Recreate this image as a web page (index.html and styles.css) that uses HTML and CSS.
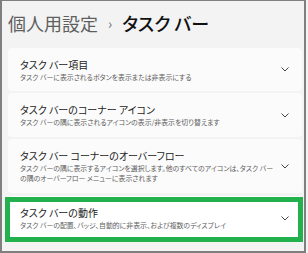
FILE: index.html
```html
<!DOCTYPE html>
<html lang="ja">
<head>
<meta charset="utf-8">
<link rel="stylesheet" href="styles.css">
</head>
<body>
<div class="frame">
  <header class="header">
    <span class="crumb">個人用設定</span>
    <span class="sep">›</span>
    <span class="current">タスク バー</span>
  </header>
  <div class="list">
    <div class="card c1">
      <div class="text">
        <div class="title">タスク バー項目</div>
        <div class="sub">タスク バーに表示されるボタンを表示または非表示にする</div>
      </div>
      <svg class="chev" width="8" height="5" viewBox="0 0 8 5"><polyline points="0.5,0.5 4,4 7.5,0.5" fill="none" stroke="#444" stroke-width="1"/></svg>
    </div>
    <div class="card c2">
      <div class="text">
        <div class="title">タスク バーのコーナー アイコン</div>
        <div class="sub">タスク バーの隅に表示されるアイコンの表示/非表示を切り替えます</div>
      </div>
      <svg class="chev" width="8" height="5" viewBox="0 0 8 5"><polyline points="0.5,0.5 4,4 7.5,0.5" fill="none" stroke="#444" stroke-width="1"/></svg>
    </div>
    <div class="card c3">
      <div class="text">
        <div class="title">タスク バー コーナーのオーバーフロー</div>
        <div class="sub">タスク バーの隅に表示するアイコンを選択します。他のすべてのアイコンは、タスク バー<br>の隅のオーバーフロー メニューに表示されます</div>
      </div>
      <svg class="chev" width="8" height="5" viewBox="0 0 8 5"><polyline points="0.5,0.5 4,4 7.5,0.5" fill="none" stroke="#444" stroke-width="1"/></svg>
    </div>
    <div class="card c4">
      <div class="text">
        <div class="title">タスク バーの動作</div>
        <div class="sub">タスク バーの配置、バッジ、自動的に非表示、および複数のディスプレイ</div>
      </div>
      <svg class="chev" width="8" height="5" viewBox="0 0 8 5"><polyline points="0.5,0.5 4,4 7.5,0.5" fill="none" stroke="#444" stroke-width="1"/></svg>
      <div class="highlight"></div>
    </div>
  </div>
</div>
</body>
</html>
```

FILE: styles.css
```css
html, body {
  margin: 0;
  padding: 0;
  background: #f3f3f3;
}
body {
  font-family: "Noto Sans CJK JP", "Noto Sans", sans-serif;
  font-feature-settings: "palt" 1;
}
.frame {
  box-sizing: border-box;
  width: 306px;
  height: 253px;
  border: 2px solid #7f7f7f;
  border-top-width: 1px;
  background: #f3f3f3;
  display: flex;
  flex-direction: column;
}
.header {
  display: flex;
  align-items: center;
  height: 24px;
  margin-top: 10px;
  padding-left: 6px;
  font-size: 18px;
  line-height: 24px;
}
.crumb {
  color: #5f5f5f;
}
.sep {
  color: #6a6a6a;
  font-size: 14px;
  margin: 0 10px 0 10px;
}
.current {
  color: #111;
  font-weight: 500;
}
.list {
  margin-top: 13px;
  margin-left: 6px;
  width: 294px;
  display: flex;
  flex-direction: column;
  gap: 2px;
}
.card {
  position: relative;
  box-sizing: border-box;
  background: #fbfbfb;
  border-radius: 4px;
  display: flex;
  align-items: center;
  padding: 0 13px 0 12px;
}
.c1 { height: 43px; }
.c2 { height: 44px; }
.c3 { height: 54px; }
.c4 { height: 44px; margin-top: 1px; background: #fff; }
.text {
  flex: 1;
  min-width: 0;
  display: flex;
  flex-direction: column;
}
.title {
  font-size: 10px;
  line-height: 14px;
  color: #1b1b1b;
  white-space: nowrap;
}
.sub {
  font-size: 6.9px;
  line-height: 10px;
  color: #5e5e5e;
  white-space: nowrap;
}
.chev {
  flex: none;
  display: block;
}
.highlight {
  position: absolute;
  top: 1px;
  left: -3px;
  right: -1px;
  bottom: -2px;
  border: 5px solid #22b14c;
}
```
